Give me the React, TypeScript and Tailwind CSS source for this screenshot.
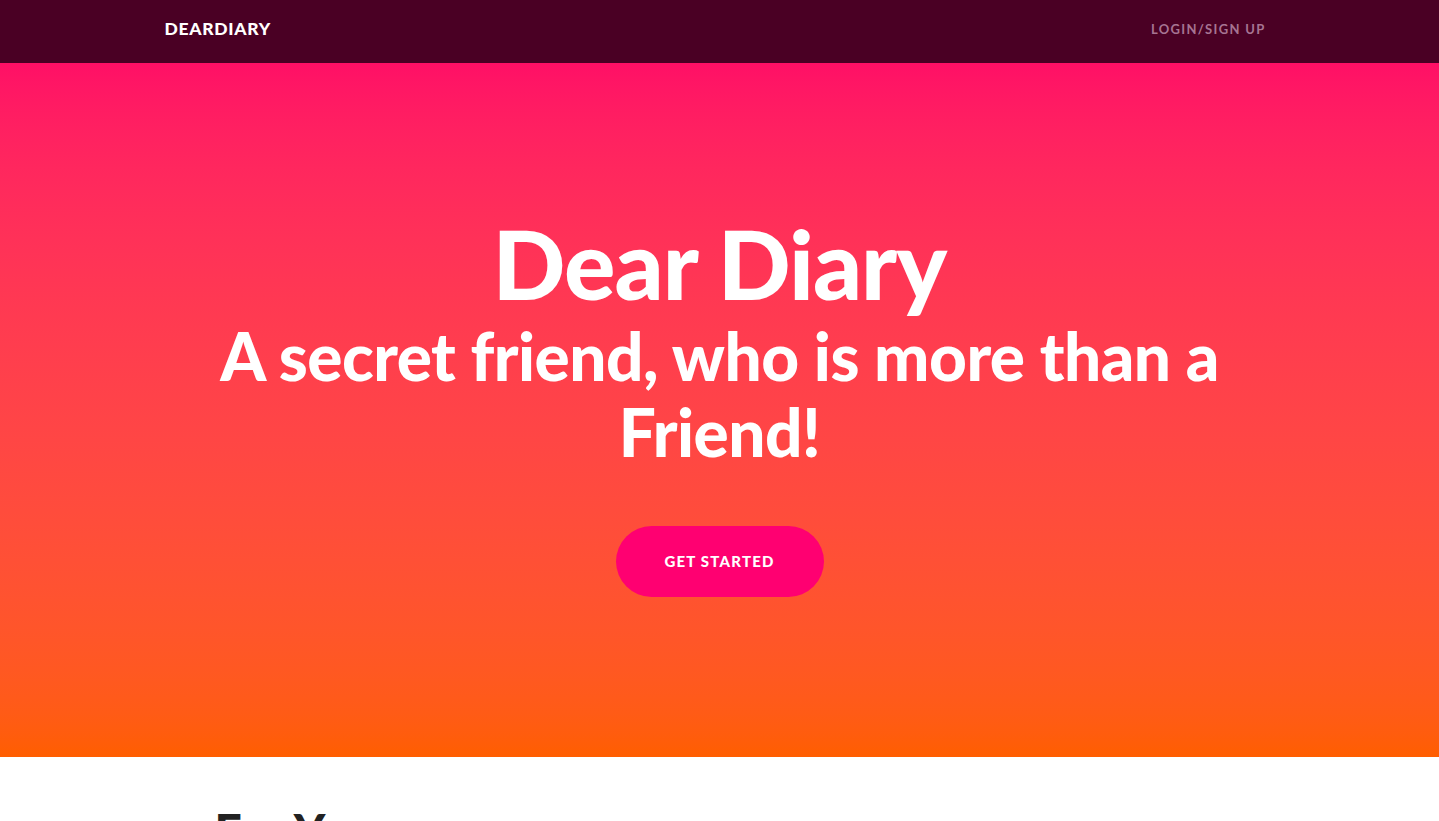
import React from "react";

export default function App() {
  return (
    <div className="min-h-screen bg-white" style={{ fontFamily: "Lato, 'Open Sans', sans-serif" }}>
      <nav className="h-[63px] bg-[#4a0024]">
        <div className="mx-auto flex h-full max-w-[1140px] items-center justify-between px-[15px] pb-[4px]">
          <span className="text-[17.5px] font-black tracking-[0.7px] text-white">DEARDIARY</span>
          <span className="pr-[9px] text-[13px] font-bold tracking-[1.3px] text-[#a67492]">LOGIN/SIGN UP</span>
        </div>
      </nav>
      <section className="flex h-[694px] flex-col items-center bg-gradient-to-b from-[#ff0f66] to-[#ff5e00] pt-[152px] text-center text-white">
        <h1 className="text-[96px] font-black leading-none tracking-[-1px]">Dear Diary</h1>
        <h2 className="mt-[7px] max-w-[1060px] text-[65.7px] font-black leading-[76px] tracking-[-0.5px]">
          A secret friend, who is more than a Friend!
        </h2>
        <button className="mt-[56px] h-[71px] w-[208px] rounded-full bg-[#ff0071] text-[15px] font-black tracking-[1.2px] text-white">
          GET STARTED
        </button>
      </section>
      <section className="bg-white">
        <div className="mx-auto max-w-[1140px] px-[15px] pt-[50px]">
          <h2 className="pl-[50px] text-[48px] font-black leading-none text-[#222]">For You</h2>
        </div>
      </section>
    </div>
  );
}
